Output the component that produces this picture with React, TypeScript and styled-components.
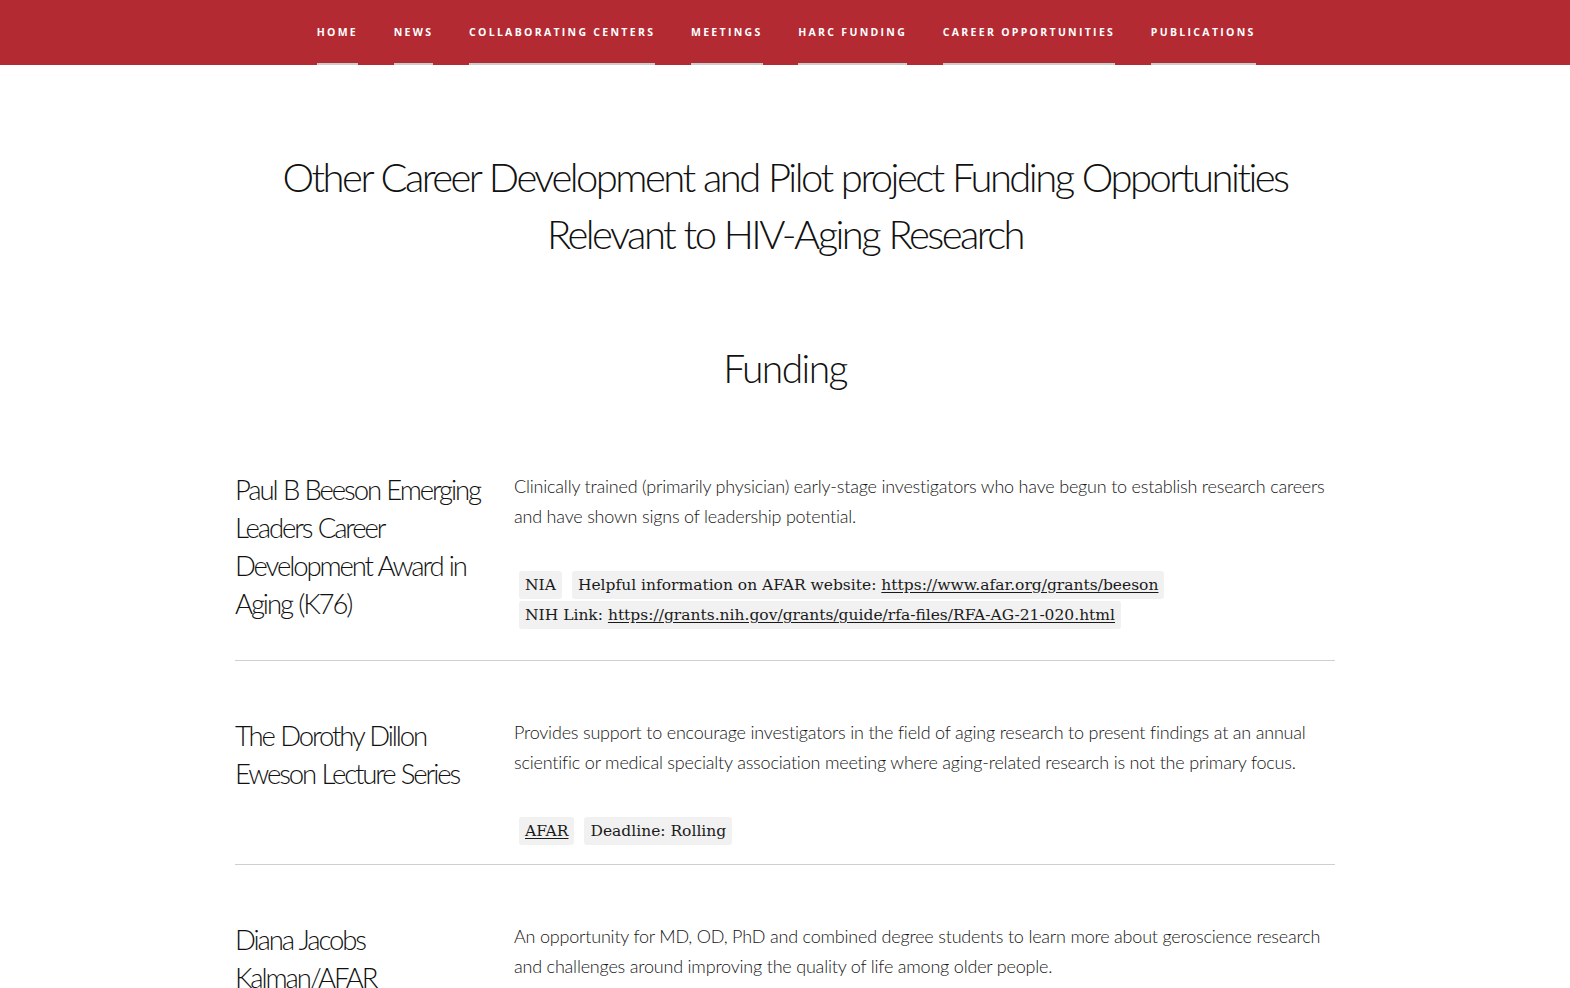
import React from "react";
import styled, { createGlobalStyle } from "styled-components";

const GlobalStyle = createGlobalStyle`
  html, body { margin: 0; padding: 0; background: #ffffff; }
  body { font-family: "Lato", "Open Sans", sans-serif; color: #111; }
  * { box-sizing: border-box; }
`;

const NavBar = styled.nav`
  height: 65px;
  background: #b42a33;
  display: flex;
  justify-content: center;
  align-items: stretch;
  gap: 38px;
`;

const NavItem = styled.a`
  display: flex;
  align-items: center;
  padding-top: 1px;
  color: #ffffff;
  font-family: "Open Sans", sans-serif;
  font-weight: 700;
  font-size: 10.5px;
  letter-spacing: 2.3px;
  text-decoration: none;
  border-bottom: 2px solid #c9cdcd;
  margin-right: -2.3px;
`;

const Main = styled.main`
  max-width: 1100px;
  margin: 0 auto;
`;

const PageTitle = styled.h1`
  margin: 84px 0 0;
  text-align: center;
  font-weight: 300;
  font-size: 40px;
  line-height: 57px;
  letter-spacing: -2.55px;
  word-spacing: 1px;
  color: #111;
`;

const SectionTitle = styled.h2`
  margin: 80px 0 22px;
  text-align: center;
  font-weight: 300;
  font-size: 39px;
  line-height: 50px;
  letter-spacing: -1.6px;
  color: #111;
`;

const Row = styled.section<{ $last?: boolean }>`
  display: grid;
  grid-template-columns: 255px 1fr;
  column-gap: 24px;
  padding: 56px 0 0;
  border-bottom: ${(p) => (p.$last ? "none" : "1px solid #cfcfcf")};
`;

const RowTitle = styled.h3`
  margin: 0;
  font-weight: 300;
  font-size: 27.5px;
  line-height: 38px;
  letter-spacing: -2.1px;
  word-spacing: 1px;
  color: #111;
`;

const RowBody = styled.div`
  min-width: 0;
`;

const Desc = styled.p`
  margin: 0;
  font-weight: 300;
  font-size: 18px;
  line-height: 30px;
  letter-spacing: -0.2px;
  color: #161616;
`;

const Tags = styled.p<{ $tail: number }>`
  margin: 39px 0 ${(p) => p.$tail}px 5px;
  font-family: "DejaVu Serif", "Liberation Serif", serif;
  font-size: 15.5px;
  line-height: 30px;
  color: #1a1a1a;
`;

const Tag = styled.span`
  background: #f1f1f1;
  border-radius: 3px;
  padding: 5px 6px;
  margin-right: 10px;
  -webkit-box-decoration-break: clone;
  box-decoration-break: clone;
`;

const TagLink = styled.a`
  color: #1a1a1a;
  text-decoration: underline;
  text-underline-offset: 2px;
`;

const navItems = [
  "HOME",
  "NEWS",
  "COLLABORATING CENTERS",
  "MEETINGS",
  "HARC FUNDING",
  "CAREER OPPORTUNITIES",
  "PUBLICATIONS",
];

export default function App() {
  return (
    <>
      <GlobalStyle />
      <NavBar>
        {navItems.map((n) => (
          <NavItem key={n} href="#">
            {n}
          </NavItem>
        ))}
      </NavBar>
      <Main>
        <PageTitle>
          Other Career Development and Pilot project Funding Opportunities
          <br />
          Relevant to HIV-Aging Research
        </PageTitle>
        <SectionTitle>Funding</SectionTitle>

        <Row>
          <RowTitle>Paul B Beeson Emerging Leaders Career Development Award in Aging (K76)</RowTitle>
          <RowBody>
            <Desc>
              Clinically trained (primarily physician) early-stage investigators who have begun to establish research
              careers and have shown signs of leadership potential.
            </Desc>
            <Tags $tail={30}>
              <Tag>NIA</Tag>
              <Tag>
                Helpful information on AFAR website:{" "}
                <TagLink href="#">https://www.afar.org/grants/beeson</TagLink>
              </Tag>
              <br />
              <Tag>
                NIH Link: <TagLink href="#">https://grants.nih.gov/grants/guide/rfa-files/RFA-AG-21-020.html</TagLink>
              </Tag>
            </Tags>
          </RowBody>
        </Row>

        <Row>
          <RowTitle>The Dorothy Dillon Eweson Lecture Series</RowTitle>
          <RowBody>
            <Desc>
              Provides support to encourage investigators in the field of aging research to present findings at an
              annual scientific or medical specialty association meeting where aging-related research is not the primary
              focus.
            </Desc>
            <Tags $tail={18}>
              <Tag>
                <TagLink href="#">AFAR</TagLink>
              </Tag>
              <Tag>Deadline: Rolling</Tag>
            </Tags>
          </RowBody>
        </Row>

        <Row $last>
          <RowTitle>Diana Jacobs Kalman/AFAR Scholarships for Research in the Biology of Aging</RowTitle>
          <RowBody>
            <Desc>
              An opportunity for MD, OD, PhD and combined degree students to learn more about geroscience research and
              challenges around improving the quality of life among older people.
            </Desc>
            <Tags $tail={40}>
              <Tag>
                <TagLink href="#">AFAR</TagLink>
              </Tag>
              <Tag>Deadline: Rolling</Tag>
            </Tags>
          </RowBody>
        </Row>
      </Main>
    </>
  );
}
